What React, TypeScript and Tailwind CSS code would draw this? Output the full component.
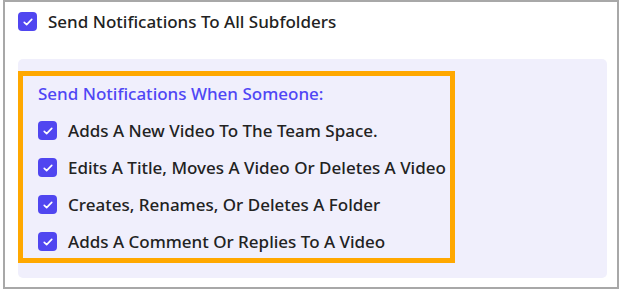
import { useState } from "react";

const options = [
  "Adds A New Video To The Team Space.",
  "Edits A Title, Moves A Video Or Deletes A Video",
  "Creates, Renames, Or Deletes A Folder",
  "Adds A Comment Or Replies To A Video",
];

function Check({ checked, onClick }: { checked: boolean; onClick: () => void }) {
  return (
    <div
      role="checkbox"
      aria-checked={checked}
      onClick={onClick}
      className={`flex h-[19px] w-[19px] shrink-0 cursor-pointer items-center justify-center rounded-[4px] ${
        checked ? "bg-[#5046f0]" : "border border-gray-400 bg-white"
      }`}
    >
      {checked && (
        <svg viewBox="0 0 16 16" className="h-[12px] w-[12px]" fill="none">
          <path d="M3 8.5l3.2 3L13 4.5" stroke="white" strokeWidth="2.2" strokeLinecap="round" strokeLinejoin="round" />
        </svg>
      )}
    </div>
  );
}

export default function App() {
  const [all, setAll] = useState(true);
  const [checks, setChecks] = useState<boolean[]>(options.map(() => true));

  const toggle = (i: number) => {
    const next = [...checks];
    next[i] = !next[i];
    setChecks(next);
  };

  return (
    <div className="h-[289px] w-[623px] bg-white pl-[3px] font-['Noto_Sans',sans-serif]">
      <div className="flex h-[289px] w-[616px] flex-col border-2 border-[#a8a8a8] pl-[13px] pr-[10px] pb-[9px]">
        <div className="flex h-[57px] items-start gap-[11px] pt-[10px]">
          <Check checked={all} onClick={() => setAll(!all)} />
          <span className="text-[17px] leading-[19px] font-medium text-[#222]">
            Send Notifications To All Subfolders
          </span>
        </div>

        <div className="flex-1 rounded-[5px] bg-[#f0effc] pt-[12px]">
          <div className="flex h-[192px] w-[437px] flex-col border-[5px] border-[#ffa800] pl-[15px]">
            <p className="h-[36px] text-[17px] font-medium leading-[36px] text-[#4f46f5]">
              Send Notifications When Someone:
            </p>
            <div className="flex flex-col">
              {options.map((label, i) => (
                <div key={label} className="flex h-[37px] items-center gap-[11px]">
                  <Check checked={checks[i]} onClick={() => toggle(i)} />
                  <span className="text-[17px] font-medium text-[#222]">{label}</span>
                </div>
              ))}
            </div>
          </div>
        </div>
      </div>
    </div>
  );
}
